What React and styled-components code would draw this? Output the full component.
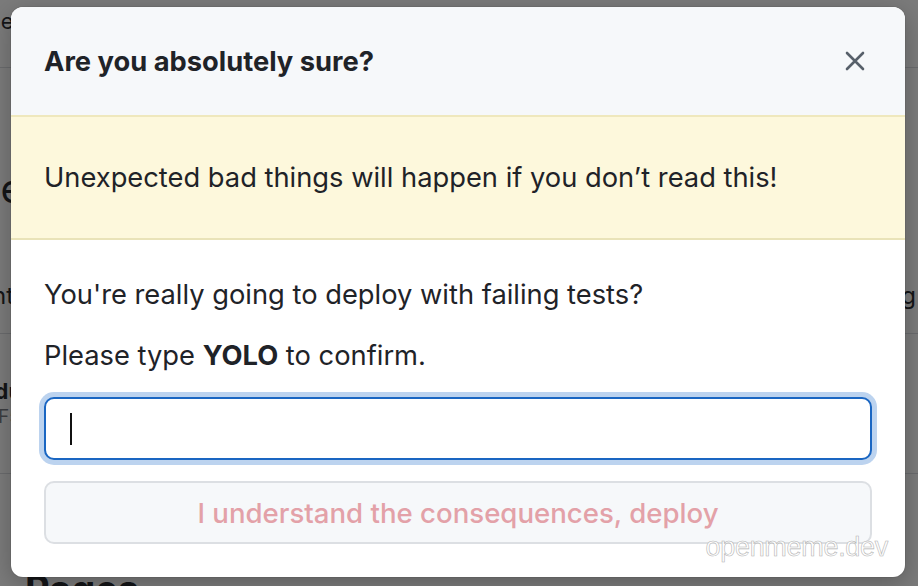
import React from "react";
import styled, { createGlobalStyle } from "styled-components";

const Global = createGlobalStyle`
  html, body { margin: 0; padding: 0; }
  body { font-family: Inter, "Noto Sans", "Liberation Sans", sans-serif; }
`;

const Stage = styled.div`
  position: relative;
  width: 918px;
  height: 586px;
  overflow: hidden;
  background: #7b7b7b;
`;

const BackPage = styled.div`
  display: flex;
  flex-direction: column;
  color: #141517;
`;

const BackRow = styled.div`
  height: ${(p) => p.$h}px;
  border-bottom: ${(p) => (p.$line ? "1px solid #6a6b6d" : "none")};
  display: flex;
  align-items: ${(p) => p.$align || "center"};
  justify-content: space-between;
  padding-top: ${(p) => p.$pt || 0}px;
  font-size: ${(p) => p.$fs || 22}px;
  font-weight: ${(p) => p.$fw || 400};
  line-height: ${(p) => p.$lh || "normal"};
  white-space: nowrap;
  box-sizing: border-box;
`;

const BackText = styled.span`
  margin-left: ${(p) => p.$ml || 0}px;
  margin-right: ${(p) => p.$mr || 0}px;
  color: ${(p) => p.$c || "#141517"};
  font-size: ${(p) => (p.$fs ? `${p.$fs}px` : "inherit")};
  font-weight: ${(p) => p.$fw || "inherit"};
`;

const Stack = styled.span`
  display: flex;
  flex-direction: column;
  line-height: 1.3;
`;

const PagesIcon = styled.span`
  display: inline-block;
  width: 9px;
  height: 14px;
  margin-top: 6px;
  margin-right: 16px;
  background: #141517;
  border-radius: 1px;
`;

const Overlay = styled.div`
  position: absolute;
  inset: 0;
  display: flex;
  align-items: flex-start;
  padding: 7px 0 0 11px;
`;

const Modal = styled.div`
  width: 894px;
  height: 570px;
  background: #ffffff;
  border-radius: 12px;
  overflow: hidden;
  display: flex;
  flex-direction: column;
  box-shadow: 0 0 0 1px rgba(0, 0, 0, 0.06), 0 6px 24px rgba(0, 0, 0, 0.25);
`;

const Header = styled.div`
  height: 108px;
  flex-shrink: 0;
  background: #f6f8fa;
  display: flex;
  align-items: center;
  justify-content: space-between;
  padding: 0 36px 0 33px;
  box-sizing: border-box;
`;

const Title = styled.h2`
  margin: 0;
  font-size: 27.3px;
  font-weight: 700;
  color: #1f2328;
  letter-spacing: 0;
`;

const CloseButton = styled.button`
  border: 0;
  background: transparent;
  padding: 0;
  width: 28px;
  height: 28px;
  display: flex;
  align-items: center;
  justify-content: center;
  color: #57606a;
  cursor: pointer;
`;

const Flash = styled.div`
  height: 125px;
  flex-shrink: 0;
  box-sizing: border-box;
  background: #fdf8dc;
  border-top: 2px solid #efe8bd;
  border-bottom: 2px solid #e9e3b8;
  display: flex;
  align-items: center;
  padding: 0 33px;
  font-size: 27.3px;
  color: #1f2328;
`;

const Body = styled.div`
  display: flex;
  flex-direction: column;
  padding: 40px 33px 0 33px;
`;

const Para = styled.p`
  margin: 0 0 ${(p) => p.$mb || 0}px 0;
  font-size: 27.3px;
  line-height: 30px;
  color: #1f2328;
`;

const Input = styled.div`
  height: 63px;
  box-sizing: border-box;
  border: 2px solid #1a66c2;
  border-radius: 10px;
  box-shadow: 0 0 0 5px #bcd3ef;
  background: #fff;
  display: flex;
  align-items: center;
  padding-left: 24px;
  margin-top: 26px;
`;

const Caret = styled.span`
  width: 2px;
  height: 32px;
  background: #111;
`;

const DangerButton = styled.button`
  margin-top: 21px;
  height: 63px;
  box-sizing: border-box;
  border: 2px solid #dcdfe3;
  border-radius: 10px;
  background: #f6f8fa;
  color: #e3a1a8;
  font-family: inherit;
  font-size: 27.6px;
  font-weight: 500;
  cursor: not-allowed;
`;

const Watermark = styled.div`
  position: absolute;
  right: 30px;
  bottom: 23px;
  font-size: 27px;
  font-family: "Liberation Sans", Arial, sans-serif;
  color: #ffffff;
  letter-spacing: -0.3px;
  -webkit-text-stroke: 0.6px #b4b4b4;
`;

export default function App() {
  return (
    <Stage>
      <Global />
      <BackPage>
        <BackRow $h={68} $line $fs={22} $align="flex-start" $pt={8}>
          <BackText $ml={-42}>Code</BackText>
          <span />
        </BackRow>
        <BackRow $h={190} $fs={40} $align="flex-start" $pt={96}>
          <BackText $ml={-24}>de</BackText>
          <span />
        </BackRow>
        <BackRow $h={76} $line $fs={24}>
          <BackText $ml={-22}>ent</BackText>
          <BackText $mr={2}>Setting</BackText>
        </BackRow>
        <BackRow $h={140} $line $fs={22}>
          <Stack>
            <BackText $ml={-20} $fw={700}>Bdu</BackText>
            <BackText $ml={-2} $c="#3b3d40" $fs={19}>F5</BackText>
          </Stack>
          <span />
        </BackRow>
        <BackRow $h={112} $align="flex-start" $pt={96} $fs={38} $fw={700} $lh={1}>
          <BackText $ml={0}>
            <PagesIcon />
            Pages
          </BackText>
        </BackRow>
      </BackPage>
      <Overlay>
        <Modal role="dialog" aria-modal="true">
          <Header>
            <Title>Are you absolutely sure?</Title>
            <CloseButton aria-label="Close">
              <svg width="22" height="22" viewBox="0 0 22 22" fill="none">
                <path d="M3 3L19 19M19 3L3 19" stroke="currentColor" strokeWidth="2.6" strokeLinecap="round" />
              </svg>
            </CloseButton>
          </Header>
          <Flash>Unexpected bad things will happen if you don’t read this!</Flash>
          <Body>
            <Para $mb={31}>You're really going to deploy with failing tests?</Para>
            <Para>
              Please type <b>YOLO</b> to confirm.
            </Para>
            <Input>
              <Caret />
            </Input>
            <DangerButton disabled>I understand the consequences, deploy</DangerButton>
          </Body>
        </Modal>
      </Overlay>
      <Watermark>openmeme.dev</Watermark>
    </Stage>
  );
}
